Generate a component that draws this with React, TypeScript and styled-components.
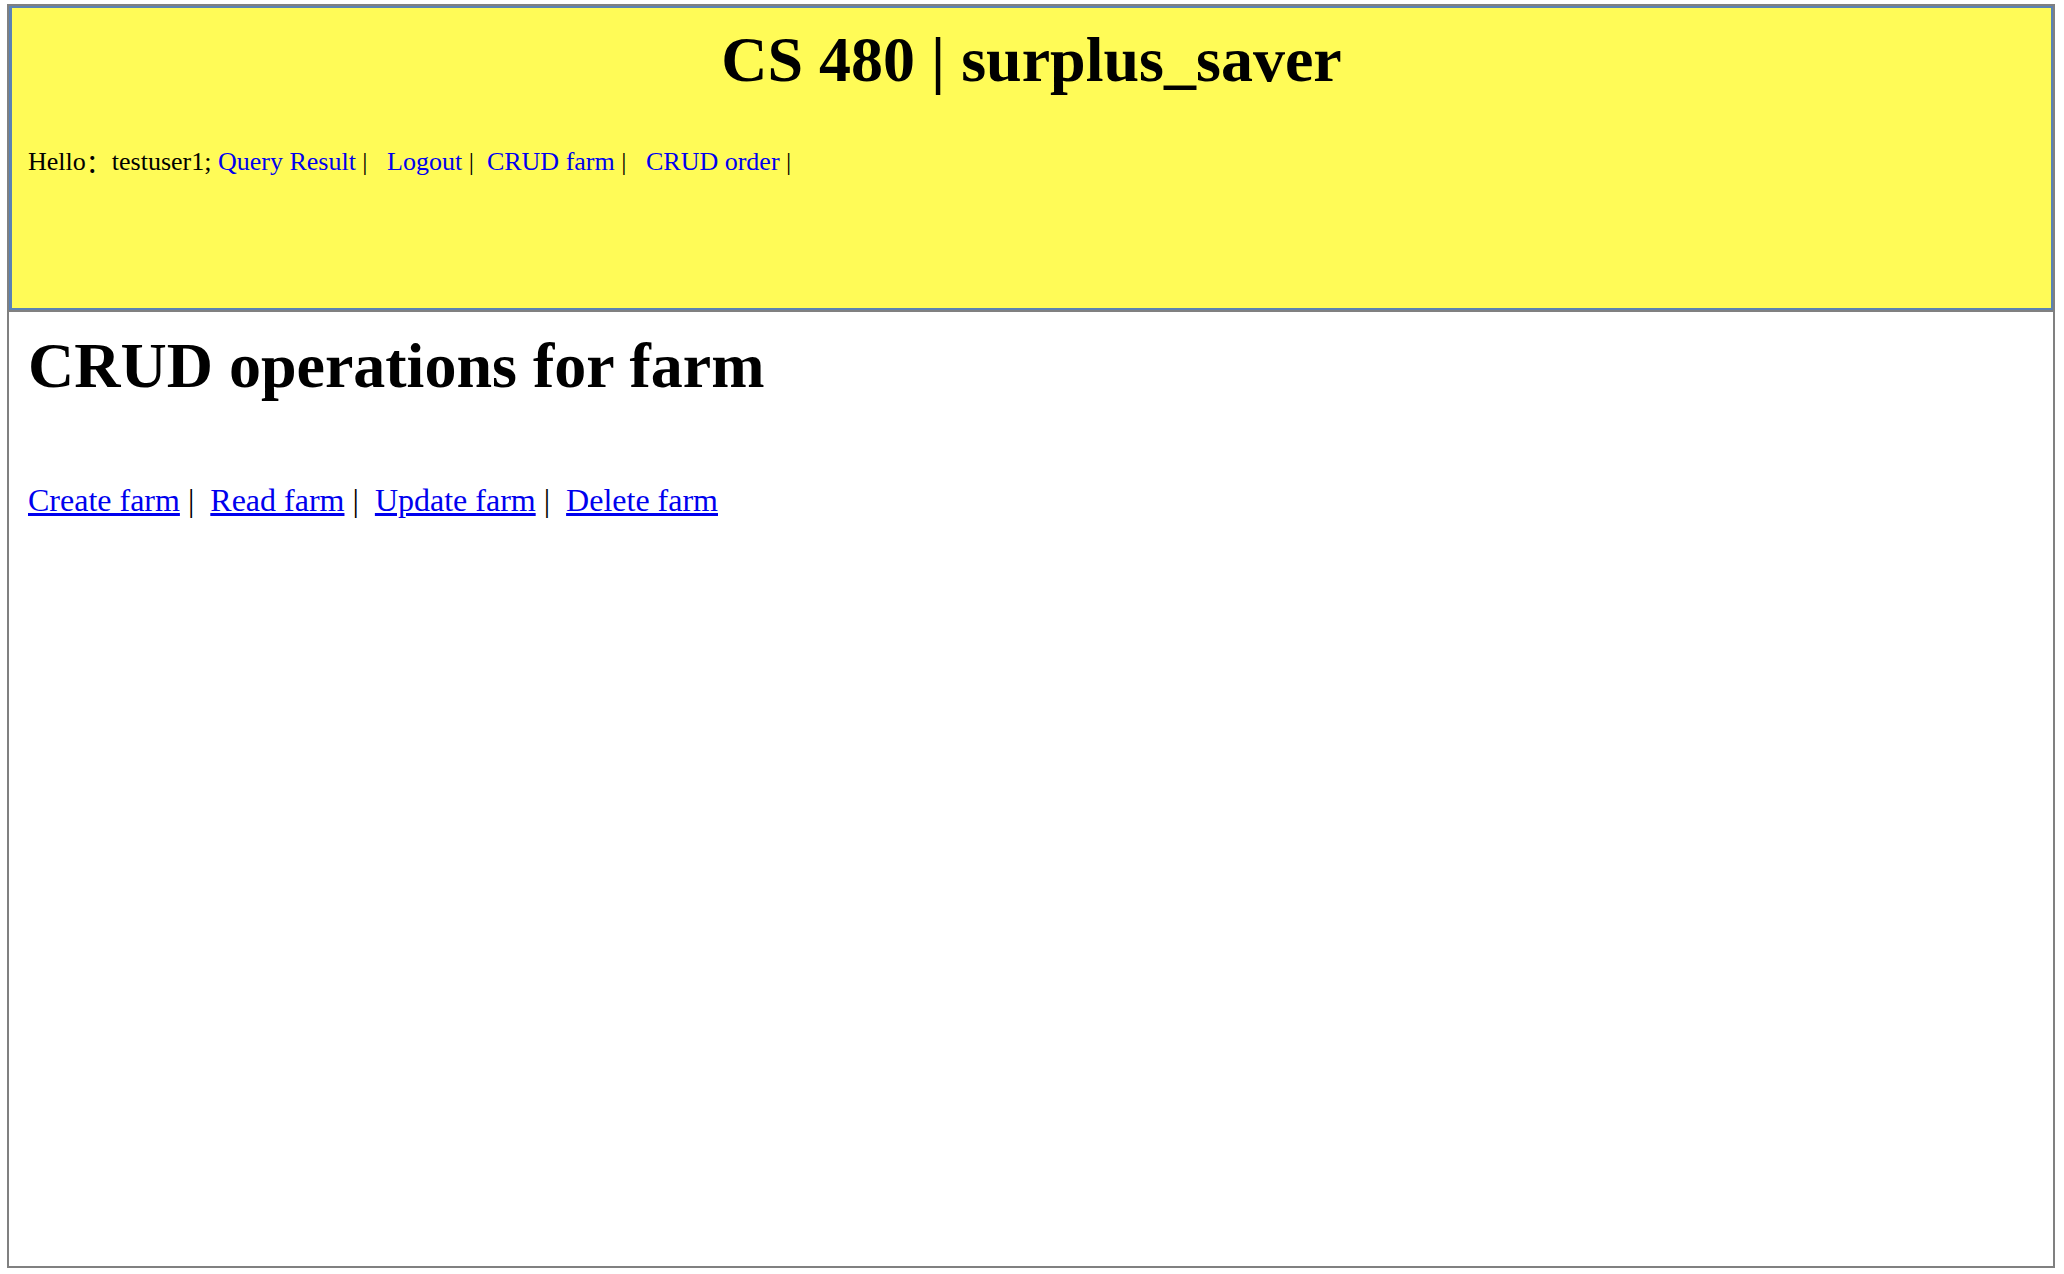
import React from "react";
import styled, { createGlobalStyle } from "styled-components";

const GlobalStyle = createGlobalStyle`
  html, body {
    margin: 0;
    padding: 0;
    background: #ffffff;
  }
  body {
    font-family: "Liberation Serif", "Times New Roman", "Noto Sans CJK SC", serif;
    color: #000000;
  }
`;

const Frame = styled.div`
  box-sizing: border-box;
  width: 2048px;
  height: 1264px;
  margin: 4px 0 0 7px;
  border: 2px solid #808080;
  display: flex;
  flex-direction: column;
`;

const Header = styled.header`
  box-sizing: border-box;
  height: 304px;
  background: #fffb57;
  border: 2px solid #5a82b4;
  border-left-width: 3px;
  box-shadow: 0 2px 0 0 #808080;
  margin-bottom: 2px;
  padding: 15px 16px 0 16px;
  display: flex;
  flex-direction: column;
`;

const Title = styled.h1`
  margin: 0;
  font-size: 64px;
  line-height: 74px;
  font-weight: bold;
  text-align: center;
`;

const NavLine = styled.nav`
  margin-top: 50px;
  font-size: 26px;
  line-height: 30px;
  white-space: pre;
`;

const Colon = styled.span`
  font-family: "Noto Sans CJK SC", sans-serif;
  font-size: 26px;
  line-height: 0;
  vertical-align: -3px;
`;

const NavLink = styled.a`
  color: #0000ee;
  text-decoration: none;
  cursor: pointer;
`;

const Main = styled.main`
  padding: 17px 19px 0 19px;
  display: flex;
  flex-direction: column;
`;

const Heading = styled.h1`
  margin: 0;
  font-size: 64px;
  line-height: 74px;
  font-weight: bold;
`;

const ActionRow = styled.div`
  margin-top: 79px;
  font-size: 32px;
  line-height: 37px;
  white-space: pre;
`;

const ActionLink = styled.a`
  color: #0000ee;
  text-decoration: underline;
  cursor: pointer;
`;

export default function App() {
  return (
    <>
      <GlobalStyle />
      <Frame>
        <Header>
          <Title>CS 480 | surplus_saver</Title>
          <NavLine>
            Hello<Colon>：</Colon>testuser1;{" "}
            <NavLink>Query Result</NavLink>
            {" |\u00a0\u00a0 "}
            <NavLink>Logout</NavLink>
            {" |\u00a0 "}
            <NavLink>CRUD farm</NavLink>
            {" |\u00a0\u00a0 "}
            <NavLink>CRUD order</NavLink>
            {" |"}
          </NavLine>
        </Header>
        <Main>
          <Heading>CRUD operations for farm</Heading>
          <ActionRow>
            <ActionLink>Create farm</ActionLink>
            {" |\u00a0 "}
            <ActionLink>Read farm</ActionLink>
            {" |\u00a0 "}
            <ActionLink>Update farm</ActionLink>
            {" |\u00a0 "}
            <ActionLink>Delete farm</ActionLink>
          </ActionRow>
        </Main>
      </Frame>
    </>
  );
}
